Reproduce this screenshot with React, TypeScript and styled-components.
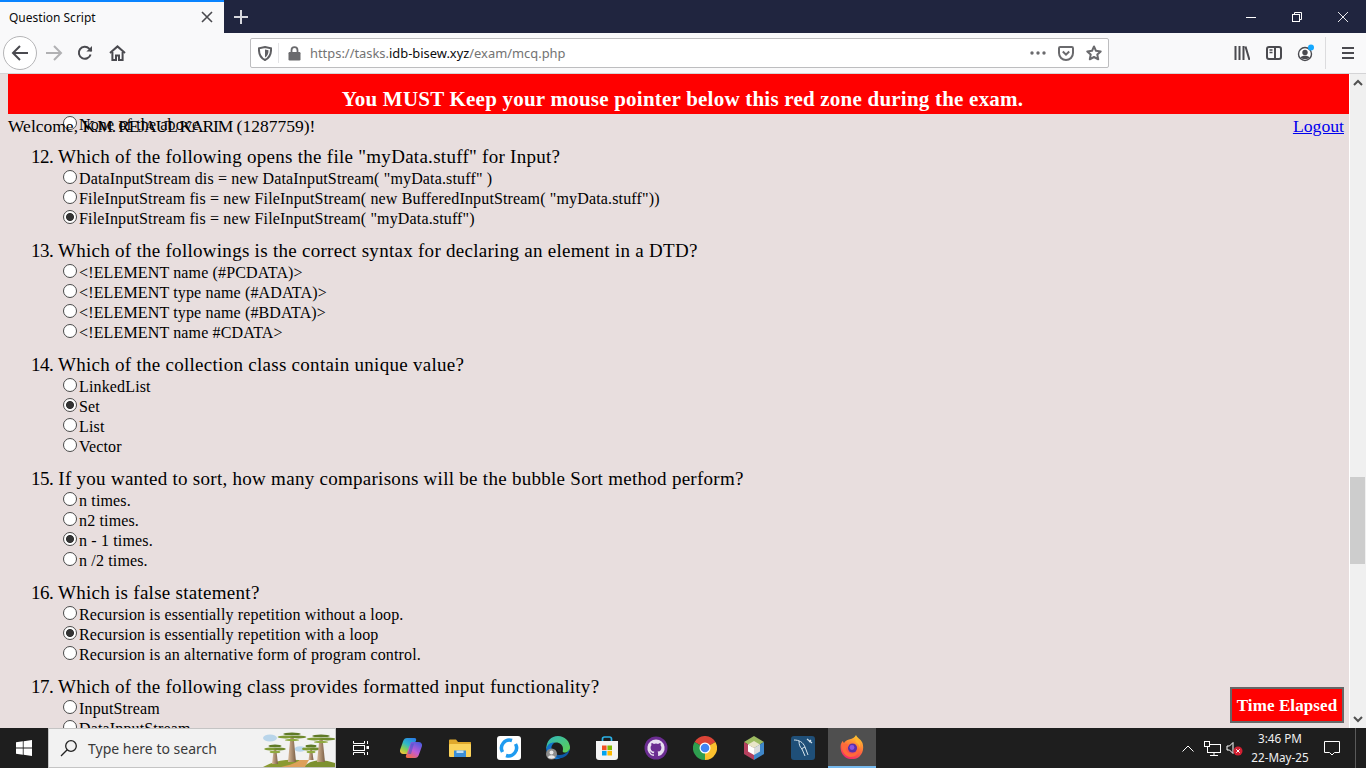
import React from "react";
import styled, { createGlobalStyle } from "styled-components";

const GlobalStyle = createGlobalStyle`
  html, body {
    margin: 0;
    padding: 0;
    width: 1366px;
    height: 768px;
    overflow: hidden;
  }
`;

const UI_FONT = `"Noto Sans", "Open Sans", sans-serif`;
const PAGE_FONT = `"Liberation Serif", serif`;

const Screen = styled.div`
  width: 1366px;
  height: 768px;
  display: flex;
  flex-direction: column;
  overflow: hidden;
  font-family: ${UI_FONT};
`;

/* ---------- browser chrome ---------- */

const TabStrip = styled.div`
  height: 33px;
  flex: none;
  display: flex;
  background: #20253f;
`;

const Tab = styled.div`
  width: 224px;
  box-sizing: border-box;
  border-top: 2px solid #0a84ff;
  background: #f9f9fa;
  display: flex;
  align-items: center;
  justify-content: space-between;
  padding: 0 11px 1px 9px;
  font-size: 12px;
  color: #0c0c0d;
`;

const NewTab = styled.div`
  width: 34px;
  display: flex;
  align-items: center;
  justify-content: center;
`;

const WindowButtons = styled.div`
  margin-left: auto;
  display: flex;
`;

const WindowButton = styled.div`
  width: 46px;
  display: flex;
  align-items: center;
  justify-content: center;
`;

const NavBar = styled.div`
  height: 41px;
  flex: none;
  box-sizing: border-box;
  display: flex;
  align-items: center;
  padding-left: 3px;
  background: #f9f9fa;
  border-bottom: 1px solid #d4d4d6;
`;

const BackCircle = styled.div`
  width: 34px;
  height: 34px;
  box-sizing: border-box;
  border: 1px solid #b5b5b7;
  border-radius: 50%;
  background: #fff;
  display: flex;
  align-items: center;
  justify-content: center;
  margin-right: 1px;
`;

const NavButton = styled.div<{ $w?: number }>`
  width: ${(p) => p.$w ?? 31.5}px;
  height: 32px;
  flex: none;
  display: flex;
  align-items: center;
  justify-content: center;
`;

const UrlBar = styled.div`
  margin-left: 117px;
  width: 859px;
  height: 30px;
  box-sizing: border-box;
  border: 1px solid #bdbdbf;
  border-radius: 2px;
  background: #fff;
  display: flex;
  align-items: center;
  padding-left: 2px;
`;

const UrlDivider = styled.div`
  width: 1px;
  height: 20px;
  background: #e4e4e6;
  margin: 0 5px 0 1px;
`;

const UrlText = styled.div`
  margin-left: 5px;
  font-size: 12.9px;
  color: #737373;
  white-space: nowrap;
  flex: 1;
  span {
    color: #0c0c0d;
  }
`;

const RightTools = styled.div`
  margin-left: 117px;
  display: flex;
  align-items: center;
`;

const ToolDivider = styled.div`
  width: 1px;
  height: 32px;
  background: #dcdcde;
  margin: 0 5px 0 3px;
`;

/* ---------- page ---------- */

const Viewport = styled.div`
  flex: 1;
  min-height: 0;
  display: flex;
  background: #fff;
`;

const Page = styled.div`
  width: 1349px;
  position: relative;
  overflow: hidden;
  background: #e8dede;
  box-sizing: border-box;
  padding: 40px 0 0 31px;
  font-family: ${PAGE_FONT};
  color: #000;
`;

const RedZone = styled.div`
  position: absolute;
  top: 0;
  left: 8px;
  right: 0;
  height: 40px;
  background: #f00;
  color: #fff;
  font-size: 21px;
  font-weight: bold;
  padding: 10px 0 0 8px;
  box-sizing: border-box;
  display: flex;
  align-items: center;
  justify-content: center;
  letter-spacing: 0.22px;
`;

const WelcomeRow = styled.div`
  position: absolute;
  top: 42px;
  left: 8px;
  right: 5px;
  display: flex;
  justify-content: space-between;
  font-size: 17.5px;
  line-height: 21px;
`;

const StudentName = styled.span`
  letter-spacing: -1.1px;
`;

const LogoutLink = styled.a`
  color: #00e;
  text-decoration: underline;
  font-size: 17.7px;
`;

const TimeBadge = styled.div`
  position: absolute;
  right: 5px;
  top: 613px;
  width: 114px;
  height: 36px;
  box-sizing: border-box;
  border: 2px solid #666;
  background: #f00;
  color: #fff;
  font-size: 17px;
  font-weight: bold;
  padding-top: 2px;
  display: flex;
  align-items: center;
  justify-content: center;
  letter-spacing: 0.1px;
`;

const QuestionBlock = styled.section`
  margin-bottom: 12px;
`;

const QuestionTitle = styled.div`
  height: 22px;
  line-height: 22px;
  font-size: 19px;
  letter-spacing: 0.28px;
  white-space: nowrap;
`;

const QuestionNumber = styled.span`
  letter-spacing: -0.5px;
`;

const OptionRow = styled.label`
  height: 20px;
  box-sizing: border-box;
  padding: 2px 0 0 31px;
  display: flex;
  align-items: center;
  font-size: 16px;
  letter-spacing: 0.15px;
  white-space: nowrap;
`;

const Radio = styled.input.attrs({ type: "radio", readOnly: true })`
  appearance: none;
  width: 14px;
  height: 14px;
  margin: -5px 2px 0 1px;
  flex: none;
  box-sizing: border-box;
  border: 1px solid #4a4a4a;
  border-radius: 50%;
  background: #fff;
  &:checked {
    background: radial-gradient(circle, #333 0, #333 3.6px, #fff 4.4px);
  }
`;

const Scrollbar = styled.div`
  width: 16px;
  margin-left: 1px;
  display: flex;
  flex-direction: column;
  background: #f0f0f0;
`;

const ScrollArrow = styled.div<{ $end?: boolean }>`
  height: 17px;
  flex: none;
  margin-top: ${(p) => (p.$end ? "auto" : "0")};
  display: flex;
  align-items: center;
  justify-content: center;
`;

const ScrollThumb = styled.div`
  height: 87px;
  margin: 386px 1px 0 0;
  background: #cdcdcd;
`;

/* ---------- taskbar ---------- */

const Taskbar = styled.div`
  height: 40px;
  flex: none;
  display: flex;
  align-items: stretch;
  background: #1e1e1e;
`;

const StartButton = styled.div`
  width: 48px;
  display: flex;
  align-items: center;
  justify-content: center;
`;

const SearchBox = styled.div`
  width: 288px;
  box-sizing: border-box;
  border: 1px solid #c4c4c4;
  background: #f2f2f2;
  display: flex;
  align-items: center;
  padding-left: 11px;
  font-size: 14px;
  color: #3a3a3a;
`;

const SearchLabel = styled.span`
  margin-left: 10px;
  flex: 1;
`;

const TaskIcon = styled.div<{ $w?: number; $active?: boolean }>`
  width: ${(p) => p.$w ?? 49}px;
  flex: none;
  box-sizing: border-box;
  display: flex;
  align-items: center;
  justify-content: center;
  background: ${(p) => (p.$active ? "#4f4f4f" : "transparent")};
  border-bottom: ${(p) => (p.$active ? "2px solid #76b9ed" : "none")};
`;

const Tray = styled.div`
  margin-left: auto;
  display: flex;
  align-items: center;
  color: #fff;
`;

const TrayIcon = styled.div<{ $w: number }>`
  width: ${(p) => p.$w}px;
  display: flex;
  align-items: center;
  justify-content: center;
`;

const Clock = styled.div`
  width: 58px;
  margin-left: 7px;
  text-align: center;
  font-size: 11.7px;
  line-height: 19px;
  margin-top: -1px;
  color: #f0f0f0;
  white-space: nowrap;
`;

const ShowDesktop = styled.div`
  width: 10px;
  margin-left: 1px;
  height: 100%;
  border-left: 1px solid #5a5a5a;
`;

/* ---------- drawings ---------- */

const ic = { fill: "none", stroke: "#4a4a4f", strokeWidth: 2 } as const;

const BackIcon = () => (
  <svg width="18" height="18" viewBox="0 0 18 18" {...ic}>
    <path d="M17 9H2M9 2L2 9l7 7" />
  </svg>
);
const ForwardIcon = () => (
  <svg width="18" height="18" viewBox="0 0 18 18" fill="none" stroke="#b1b1b3" strokeWidth="2">
    <path d="M1 9h15M9 2l7 7-7 7" />
  </svg>
);
const ReloadIcon = () => (
  <svg width="16" height="16" viewBox="0 0 16 16" {...ic}>
    <path d="M13.6 9.500A6 6 0 1 1 12.200 3.600L14.600 6" />
    <path d="M15 1v5.600H9.400" fill="#4a4a4f" stroke="none" />
  </svg>
);
const HomeIcon = () => (
  <svg width="17" height="16" viewBox="0 0 17 16" {...ic}>
    <path d="M1 8l7.500-6.600L16 8" />
    <path d="M3.400 7v8h3.600v-4.400h3V15h3.600V7" />
  </svg>
);
const ShieldIcon = () => (
  <svg width="14" height="15" viewBox="0 0 14 15">
    <path d="M7 1l6 1.400c.3 5.500-1.600 9.600-6 11.600C2.600 12 .7 7.900 1 2.400z" fill="none" stroke="#5f5f62" strokeWidth="2" />
    <path d="M7 3.500l3.500.8C10.600 7.500 9.500 10 7 11.500z" fill="#5f5f62" />
  </svg>
);
const LockIcon = () => (
  <svg width="13" height="15" viewBox="0 0 13 15">
    <path d="M3.500 6V4.200a3 3 0 0 1 6 0V6" fill="none" stroke="#6a6a6d" strokeWidth="1.800" />
    <rect x="0.500" y="6" width="12" height="8.500" rx="1.200" fill="#6a6a6d" />
  </svg>
);
const DotsIcon = () => (
  <svg width="16" height="4" viewBox="0 0 16 4" fill="#6a6a6d">
    <circle cx="2" cy="2" r="1.700" />
    <circle cx="8" cy="2" r="1.700" />
    <circle cx="14" cy="2" r="1.700" />
  </svg>
);
const PocketIcon = () => (
  <svg width="16" height="15" viewBox="0 0 16 15" fill="none" stroke="#6a6a6d" strokeWidth="2">
    <path d="M1 2.200Q1 1 2.200 1h11.600Q15 1 15 2.200V7a7 7 0 0 1-14 0z" />
    <path d="M4.800 5.500L8 8.600l3.200-3.100" />
  </svg>
);
const StarIcon = () => (
  <svg width="16" height="16" viewBox="0 0 16 16" fill="none" stroke="#6a6a6d" strokeWidth="2" strokeLinejoin="round">
    <path d="M8 1.500l2 4.300 4.700.6-3.400 3.200.9 4.700L8 12l-4.200 2.300.9-4.700L1.300 6.400 6 5.800z" />
  </svg>
);
const LibraryIcon = () => (
  <svg width="16" height="14" viewBox="0 0 16 14" {...ic}>
    <path d="M1.500 0v14M5.500 0v14M9.500 0v14M11.500 0.500L15.500 14" />
  </svg>
);
const SidebarIcon = () => (
  <svg width="16" height="14" viewBox="0 0 16 14" fill="none" stroke="#4a4a4f" strokeWidth="2">
    <rect x="1" y="1" width="14" height="12" rx="2" />
    <path d="M9 1v12" />
    <path d="M3.500 4h3M3.500 6.500h3" strokeWidth="1.300" />
  </svg>
);
const AccountIcon = () => (
  <svg width="20" height="20" viewBox="0 0 20 20">
    <circle cx="9" cy="11" r="6.500" fill="#fff" stroke="#4a4a4f" strokeWidth="1.400" />
    <circle cx="9" cy="9.500" r="2.700" fill="#4a4a4f" />
    <path d="M4.500 14.500c1-2.500 8-2.500 9 0-1.500 2-7.500 2-9 0z" fill="#4a4a4f" />
    <circle cx="15" cy="4.500" r="3" fill="#14a8ff" />
  </svg>
);
const MenuIcon = () => (
  <svg width="14" height="14" viewBox="0 0 14 14" {...ic}>
    <path d="M1 2h12M1 7h12M1 12h12" />
  </svg>
);

const WindowsLogo = () => (
  <svg width="16" height="16" viewBox="0 0 16 16" fill="#fff">
    <path d="M0 2.300L6.800 1.300V7.600H0zM7.600 1.200L16 0V7.600H7.600zM0 8.400H6.800V14.700L0 13.700zM7.600 8.400H16V16L7.600 14.800z" />
  </svg>
);
const SearchGlass = () => (
  <svg width="18" height="18" viewBox="0 0 18 18" fill="none" stroke="#222" strokeWidth="1.300">
    <circle cx="11" cy="7" r="5.300" />
    <path d="M7.200 10.800L1 17" />
  </svg>
);

const Baobab = ({ x, top, bottom, w }: { x: number; top: number; bottom: number; w: number }) => (
  <g>
    <path
      d={`M${x - w / 2} ${bottom}L${x - w / 5} ${top}h${(w * 2) / 5}L${x + w / 2} ${bottom}z`}
      fill="url(#trunk)"
    />
    <ellipse cx={x} cy={top - 3} rx={w * 1.1} ry="1.500" fill="#5f7a26" />
    <ellipse cx={x - w * 0.8} cy={top} rx={w} ry="1.400" fill="#7f9a34" />
    <ellipse cx={x + w * 0.8} cy={top} rx={w} ry="1.400" fill="#6f8a2c" />
    <ellipse cx={x} cy={top + 3} rx={w * 0.9} ry="1.200" fill="#8faa40" />
  </g>
);

const Baobabs = () => (
  <svg width="78" height="38" viewBox="0 0 78 38">
    <defs>
      <linearGradient id="trunk" x1="0" y1="0" x2="1" y2="0">
        <stop offset="0" stopColor="#d8b898" />
        <stop offset="1" stopColor="#7a5f45" />
      </linearGradient>
    </defs>
    <ellipse cx="13" cy="9" rx="7" ry="3.500" fill="#b9d5ea" />
    <ellipse cx="43" cy="20" rx="5.500" ry="2.800" fill="#b9d5ea" />
    <path d="M6 38Q22 29 42 31L52 38z" fill="#8a9a32" />
    <path d="M46 38Q58 27 78 34V38z" fill="#7d9130" />
    <path d="M24 38Q38 35 43 31L52 31Q50 34 48 38z" fill="#dda05a" />
    <Baobab x={18} top={20} bottom={35} w={6} />
    <Baobab x={35} top={8} bottom={33} w={8} />
    <Baobab x={54} top={20} bottom={31} w={5} />
    <Baobab x={64} top={10} bottom={33} w={8} />
  </svg>
);

const TaskViewIcon = () => (
  <svg width="16" height="16" viewBox="0 0 16 16" fill="none" stroke="#fff" strokeWidth="1">
    <path d="M0.500 1v2.500h11V1M0.500 15v-2.500h11V15" />
    <rect x="0.500" y="5.500" width="11" height="5" />
    <path d="M14.500 1v3M14.500 12v3" />
    <rect x="13.500" y="6" width="2.500" height="3" fill="#fff" stroke="none" />
  </svg>
);
const CopilotIcon = () => (
  <svg width="24" height="24" viewBox="0 0 24 24">
    <defs>
      <linearGradient id="cpA" x1="0.800" y1="0" x2="0.200" y2="1">
        <stop offset="0" stopColor="#2a7fe8" />
        <stop offset="0.45" stopColor="#2fb8c8" />
        <stop offset="0.75" stopColor="#8ccf4d" />
        <stop offset="1" stopColor="#f5c33b" />
      </linearGradient>
      <linearGradient id="cpB" x1="0.800" y1="0" x2="0.200" y2="1">
        <stop offset="0" stopColor="#4a5be0" />
        <stop offset="0.55" stopColor="#c25bd6" />
        <stop offset="1" stopColor="#f46a45" />
      </linearGradient>
    </defs>
    <path d="M8 2h7.500c1.500 0 2 1 1.500 2.500L12 18H4.500C2 18 .5 16 1 14l3.200-9C5 3 6 2 8 2z" fill="url(#cpA)" />
    <path d="M12 6h7.500c2.500 0 4 2 3.500 4l-3.200 9c-.8 2-1.800 3-3.800 3H8.500C7 22 6.500 21 7 19.500z" fill="url(#cpB)" />
    <path d="M12 7.500l3 0-3 10.500-3 0z" fill="#3a55c8" opacity="0.55" />
  </svg>
);
const FilesIcon = () => (
  <svg width="24" height="20" viewBox="0 0 24 20">
    <path d="M1 2.500Q1 1.500 2 1.500h6l2 2.500h12.500Q23 4 23 5v2H1z" fill="#e0a92c" />
    <rect x="1" y="6" width="22" height="13" rx="1" fill="#fbd35b" />
    <rect x="6" y="12.500" width="12" height="6.500" fill="#3a8ed8" />
    <rect x="8.500" y="12.500" width="7" height="2.500" fill="#bfe0f5" />
  </svg>
);
const SyncAppIcon = () => (
  <svg width="24" height="24" viewBox="0 0 24 24">
    <rect width="24" height="24" rx="3" fill="#fff" />
    <path d="M5.500 16A8 8 0 0 1 15 4.500" fill="none" stroke="#1e9bf0" strokeWidth="3.500" />
    <path d="M18.500 8A8 8 0 0 1 9 19.500" fill="none" stroke="#1e9bf0" strokeWidth="3.500" />
  </svg>
);
const EdgeIcon = () => (
  <svg width="24" height="24" viewBox="0 0 24 24">
    <defs>
      <linearGradient id="edA" x1="0" y1="0" x2="1" y2="1">
        <stop offset="0" stopColor="#2fb6c0" />
        <stop offset="1" stopColor="#5fd04c" />
      </linearGradient>
    </defs>
    <path d="M12 0a12 12 0 0 1 12 12c0 3-3 5-6 4.500-2-.5-1-2-1-3.500 0-4-3-6.500-7-6.500-5 0-8 4-9.800 6.500C.5 5 5 0 12 0z" fill="url(#edA)" />
    <path d="M.2 12.500C1.500 8 5 6 9 6.500c-3 1.500-4 4-3.500 7.500.8 5 6 8 11 6.500C14 23.500 8 24.500 4 20.500 1.500 18.500.2 15.500.2 12.500z" fill="#1273c9" />
    <path d="M6 14c1 4 6.500 6 11 4.500 3-1 5.500-3 6.700-6-.5 5.500-4 8.500-8 9.500-5 1-9.700-3-9.700-8z" fill="#0d5aa7" />
    <circle cx="5.500" cy="18" r="5.500" fill="#8d8d8d" />
    <circle cx="5.500" cy="16.500" r="2" fill="#e8e8e8" />
    <path d="M2 21.500c.5-3 6.500-3 7 0-1.500 1.500-5.500 1.500-7 0z" fill="#e8e8e8" />
  </svg>
);
const StoreIcon = () => (
  <svg width="24" height="24" viewBox="0 0 24 24">
    <path d="M7.500 5V3q0-2 2-2h5q2 0 2 2v2" fill="none" stroke="#2bb3e8" strokeWidth="1.700" />
    <path d="M1 5h22v16q0 3-3 3H4q-3 0-3-3z" fill="#f4f4f4" />
    <rect x="7" y="9.500" width="4.600" height="4.600" fill="#f05023" />
    <rect x="12.400" y="9.500" width="4.600" height="4.600" fill="#7fba00" />
    <rect x="7" y="14.900" width="4.600" height="4.600" fill="#00a4ef" />
    <rect x="12.400" y="14.900" width="4.600" height="4.600" fill="#ffb900" />
  </svg>
);
const GithubIcon = () => (
  <svg width="24" height="24" viewBox="0 0 24 24">
    <circle cx="12" cy="12" r="11.500" fill="#6b2c91" />
    <path
      fill="#e8dff0"
      d="M12 3.500a8.500 8.500 0 0 0-2.700 16.600c.4.100.6-.2.600-.4v-1.500c-2.400.5-2.900-1-2.900-1-.4-1-1-1.300-1-1.300-.8-.5.100-.5.100-.5.900.100 1.300.9 1.300.9.800 1.300 2 1 2.500.7.100-.6.300-1 .6-1.200-1.900-.2-3.900-1-3.900-4.200 0-.9.300-1.700.9-2.300-.1-.2-.4-1.100.1-2.300 0 0 .7-.2 2.300.9a8 8 0 0 1 4.200 0c1.600-1.100 2.300-.9 2.300-.9.500 1.200.2 2.100.1 2.300.5.600.9 1.400.9 2.300 0 3.200-2 4-3.900 4.200.3.300.6.800.6 1.600v2.300c0 .2.200.5.600.4A8.500 8.500 0 0 0 12 3.500z"
    />
  </svg>
);
const ChromeIcon = () => (
  <svg width="24" height="24" viewBox="0 0 24 24">
    <path d="M12 12L1.600 6A12 12 0 0 1 22.400 6z" fill="#db4437" />
    <path d="M12 12L22.400 6A12 12 0 0 1 12 24z" fill="#fbc02d" />
    <path d="M12 12L12 24A12 12 0 0 1 1.600 6z" fill="#2e9e4f" />
    <circle cx="12" cy="12" r="5.500" fill="#fff" />
    <circle cx="12" cy="12" r="4.300" fill="#4285f4" />
  </svg>
);
const NetbeansIcon = () => (
  <svg width="22" height="24" viewBox="0 0 22 24">
    <path d="M11 0l10 6-10 6L1 6z" fill="#9dbb61" />
    <path d="M1 6l10 6v12L1 18z" fill="#b5405e" />
    <path d="M21 6L11 12v12l10-6z" fill="#3f87c9" />
    <path d="M11 5l6 3.500-6 3.500-6-3.500z" fill="#e9e5c8" />
    <path d="M5 8.500l6 3.500v7l-6-3.500z" fill="#fff" />
    <path d="M17 8.500l-6 3.500v7l6-3.500z" fill="#dcdcdc" />
  </svg>
);
const MysqlIcon = () => (
  <svg width="24" height="24" viewBox="0 0 24 24">
    <rect width="24" height="24" rx="3" fill="#1f4f78" />
    <path d="M3 4c5 0 9 2 11 7l3 8M14 11l-4 2M8 5c0 4 1 6 3 8l3 7" fill="none" stroke="#d5e3ec" strokeWidth="1" />
    <path d="M16 3l5 4M18 6l2-2" fill="none" stroke="#d5e3ec" strokeWidth="1.200" />
  </svg>
);
const FirefoxIcon = () => (
  <svg width="24" height="24" viewBox="0 0 24 24">
    <defs>
      <linearGradient id="ffA" x1="0.700" y1="0" x2="0.300" y2="1">
        <stop offset="0" stopColor="#ffcb2e" />
        <stop offset="0.5" stopColor="#ff7139" />
        <stop offset="1" stopColor="#f0246e" />
      </linearGradient>
    </defs>
    <path d="M16 0c1 3 5 4 6.500 8 1.500 5 .5 10-3 13.500-4 3.500-11 3.500-15 0C1 18.500 0 14 .8 9.500 1.300 8 2 6.500 3 6c0 1 .5 1.500 1 2 1-2 3-3 5-3.500C13 3.500 15 2 16 0z" fill="url(#ffA)" />
    <circle cx="12.500" cy="13" r="4.600" fill="#5b2fa8" />
    <circle cx="12" cy="12.500" r="2.400" fill="#8a56e0" />
    <path d="M2 9c3-1 6 0 7 2-1.500 1-3 1-3 2.500 0 3 3 5 6 5 3.500 0 5.500-2 6.500-5 .5 5-3 8.500-8 8.500C6 22 1 17 2 9z" fill="#ff6a3a" />
    <path d="M15 2c3 2 6 6 5 11-.5-3-2.500-5-4.500-6 .5-2 .5-3.500-.5-5z" fill="#ffb52e" />
  </svg>
);

const Chevron = ({ up }: { up?: boolean }) => (
  <svg width="10" height="7" viewBox="0 0 10 7" fill="none" stroke="#505050" strokeWidth="2">
    <path d={up ? "M1 6l4-4 4 4" : "M1 1l4 4 4-4"} />
  </svg>
);

/* ---------- data ---------- */

type Question = { num?: string; title?: string; options: string[]; picked?: number };

const questions: Question[] = [
  { options: ["None of the above"] },
  {
    num: "12.",
    title: ` Which of the following opens the file "myData.stuff" for Input?`,
    options: [
      `DataInputStream dis = new DataInputStream( "myData.stuff" )`,
      `FileInputStream fis = new FileInputStream( new BufferedInputStream( "myData.stuff"))`,
      `FileInputStream fis = new FileInputStream( "myData.stuff")`,
    ],
    picked: 2,
  },
  {
    num: "13.",
    title: " Which of the followings is the correct syntax for declaring an element in a DTD?",
    options: [
      "<!ELEMENT name (#PCDATA)>",
      "<!ELEMENT type name (#ADATA)>",
      "<!ELEMENT type name (#BDATA)>",
      "<!ELEMENT name #CDATA>",
    ],
  },
  {
    num: "14.",
    title: " Which of the collection class contain unique value?",
    options: ["LinkedList", "Set", "List", "Vector"],
    picked: 1,
  },
  {
    num: "15.",
    title: " If you wanted to sort, how many comparisons will be the bubble Sort method perform?",
    options: ["n times.", "n2 times.", "n - 1 times.", "n /2 times."],
    picked: 2,
  },
  {
    num: "16.",
    title: " Which is false statement?",
    options: [
      "Recursion is essentially repetition without a loop.",
      "Recursion is essentially repetition with a loop",
      "Recursion is an alternative form of program control.",
    ],
    picked: 1,
  },
  {
    num: "17.",
    title: " Which of the following class provides formatted input functionality?",
    options: ["InputStream", "DataInputStream"],
  },
];

export default function App() {
  return (
    <Screen>
      <GlobalStyle />
      <TabStrip>
        <Tab>
          Question Script
          <svg width="12" height="12" viewBox="0 0 12 12" stroke="#4a4a4f" strokeWidth="1.600">
            <path d="M1 1l10 10M11 1L1 11" />
          </svg>
        </Tab>
        <NewTab>
          <svg width="14" height="14" viewBox="0 0 14 14" stroke="#d7d8de" strokeWidth="2">
            <path d="M7 0v14M0 7h14" />
          </svg>
        </NewTab>
        <WindowButtons>
          <WindowButton>
            <svg width="10" height="10" viewBox="0 0 10 10" stroke="#fff">
              <path d="M0 5.500h10" />
            </svg>
          </WindowButton>
          <WindowButton>
            <svg width="10" height="10" viewBox="0 0 10 10" fill="none" stroke="#fff">
              <rect x="0.500" y="2.500" width="7" height="7" />
              <path d="M2.500 2.500v-2h7v7h-2" />
            </svg>
          </WindowButton>
          <WindowButton>
            <svg width="10" height="10" viewBox="0 0 10 10" stroke="#fff" strokeWidth="0.900">
              <path d="M0 0l10 10M10 0L0 10" />
            </svg>
          </WindowButton>
        </WindowButtons>
      </TabStrip>

      <NavBar>
        <BackCircle>
          <BackIcon />
        </BackCircle>
        <NavButton>
          <ForwardIcon />
        </NavButton>
        <NavButton>
          <ReloadIcon />
        </NavButton>
        <NavButton $w={32}>
          <HomeIcon />
        </NavButton>
        <UrlBar>
          <NavButton $w={24}>
            <ShieldIcon />
          </NavButton>
          <UrlDivider />
          <NavButton $w={21}>
            <LockIcon />
          </NavButton>
          <UrlText>
            https://tasks.<span>idb-bisew.xyz</span>/exam/mcq.php
          </UrlText>
          <NavButton $w={28}>
            <DotsIcon />
          </NavButton>
          <NavButton $w={28}>
            <PocketIcon />
          </NavButton>
          <NavButton $w={28}>
            <StarIcon />
          </NavButton>
        </UrlBar>
        <RightTools>
          <NavButton $w={32}>
            <LibraryIcon />
          </NavButton>
          <NavButton $w={32}>
            <SidebarIcon />
          </NavButton>
          <NavButton $w={32}>
            <AccountIcon />
          </NavButton>
          <ToolDivider />
          <NavButton $w={34}>
            <MenuIcon />
          </NavButton>
        </RightTools>
      </NavBar>

      <Viewport>
        <Page>
          {questions.map((q, i) => (
            <QuestionBlock key={i}>
              {q.title && (
                <QuestionTitle>
                  <QuestionNumber>{q.num}</QuestionNumber>
                  {q.title}
                </QuestionTitle>
              )}
              {q.options.map((o, j) => (
                <OptionRow key={j}>
                  <Radio name={`q${i}`} defaultChecked={q.picked === j} />
                  {o}
                </OptionRow>
              ))}
            </QuestionBlock>
          ))}
          <RedZone>You MUST Keep your mouse pointer below this red zone during the exam.</RedZone>
          <WelcomeRow>
            <span>
              Welcome, <StudentName>K.M. REJAUL KARIM</StudentName> (1287759)!
            </span>
            <LogoutLink href="#">Logout</LogoutLink>
          </WelcomeRow>
          <TimeBadge>Time Elapsed</TimeBadge>
        </Page>
        <Scrollbar>
          <ScrollArrow>
            <Chevron up />
          </ScrollArrow>
          <ScrollThumb />
          <ScrollArrow $end>
            <Chevron />
          </ScrollArrow>
        </Scrollbar>
      </Viewport>

      <Taskbar>
        <StartButton>
          <WindowsLogo />
        </StartButton>
        <SearchBox>
          <SearchGlass />
          <SearchLabel>Type here to search</SearchLabel>
          <Baobabs />
        </SearchBox>
        <TaskIcon $w={50}>
          <TaskViewIcon />
        </TaskIcon>
        <TaskIcon>
          <CopilotIcon />
        </TaskIcon>
        <TaskIcon>
          <FilesIcon />
        </TaskIcon>
        <TaskIcon>
          <SyncAppIcon />
        </TaskIcon>
        <TaskIcon>
          <EdgeIcon />
        </TaskIcon>
        <TaskIcon>
          <StoreIcon />
        </TaskIcon>
        <TaskIcon>
          <GithubIcon />
        </TaskIcon>
        <TaskIcon>
          <ChromeIcon />
        </TaskIcon>
        <TaskIcon>
          <NetbeansIcon />
        </TaskIcon>
        <TaskIcon $w={50}>
          <MysqlIcon />
        </TaskIcon>
        <TaskIcon $w={48} $active>
          <FirefoxIcon />
        </TaskIcon>
        <Tray>
          <TrayIcon $w={24}>
            <svg width="12" height="7" viewBox="0 0 12 7" fill="none" stroke="#fff">
              <path d="M0.500 6.500L6 1l5.500 5.500" />
            </svg>
          </TrayIcon>
          <TrayIcon $w={24}>
            <svg width="17" height="15" viewBox="0 0 17 15" fill="none" stroke="#fff">
              <rect x="3.500" y="3.500" width="13" height="8" />
              <rect x="0.500" y="0.500" width="5" height="5" fill="#1e1e1e" />
              <path d="M10 11.500v3M6 14.500h8" />
            </svg>
          </TrayIcon>
          <TrayIcon $w={20}>
            <svg width="17" height="15" viewBox="0 0 17 15">
              <path d="M1 5h2.500L7 1.500v11L3.500 9H1z" fill="none" stroke="#fff" />
              <circle cx="12" cy="10" r="4.500" fill="#d32032" />
              <path d="M10.300 8.300l3.400 3.400M13.700 8.300l-3.400 3.400" stroke="#fff" />
            </svg>
          </TrayIcon>
          <Clock>
            3:46 PM
            <br />
            22-May-25
          </Clock>
          <TrayIcon $w={45}>
            <svg width="16" height="16" viewBox="0 0 16 16" fill="none" stroke="#fff">
              <path d="M0.500 1.500h15v11h-5l-2.500 2.500-2.500-2.500h-5z" />
            </svg>
          </TrayIcon>
          <ShowDesktop />
        </Tray>
      </Taskbar>
    </Screen>
  );
}
